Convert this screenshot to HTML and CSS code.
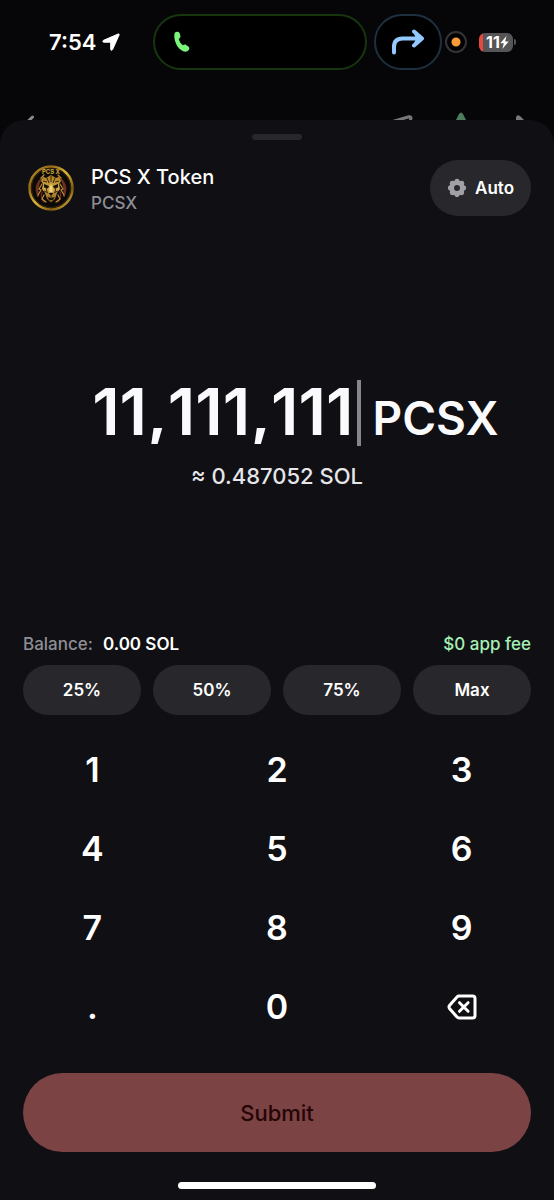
FILE: index.html
```html
<!DOCTYPE html>
<html lang="en">
<head>
<meta charset="utf-8">
<meta name="viewport" content="width=device-width, initial-scale=1">
<title>Swap PCSX</title>
<link rel="stylesheet" href="styles.css">
</head>
<body>
<div class="screen">
  <div class="status">
    <div class="clock">
      <span>7:54</span>
      <svg width="18" height="18" viewBox="0 0 18 18"><path d="M16.200 1 1.600 7.300c-1.200.5-1 1.900.3 1.900h6.800v7c0 1.300 1.400 1.500 1.900.3L17.100 1.900c.3-.8-.2-1.200-.9-.9Z" fill="#fff" stroke="#fff" stroke-linejoin="round"/></svg>
    </div>
    <div class="island">
      <svg width="18" height="22" viewBox="0 0 18 22"><path d="M2.300 1.200C4 .1 6.300.6 6.800 2.600l.6 2.600c.3 1.300-.9 2.100-1.700 2.600.5 2.500 2.200 5 4.300 6.500.9-.6 2-1.100 3.100-.4l2.500 1.900c1.400 1.200.8 3.100-.9 4.200-3.200 2-7.600-.7-10.300-4.700C1.600 11 .2 3.200 2.300 1.200Z" fill="#7bf57c"/></svg>
    </div>
    <div class="share">
      <svg width="34" height="26" viewBox="0 0 34 26" fill="none" stroke="#94c9ff" stroke-width="4" stroke-linecap="round" stroke-linejoin="round"><path d="M3 23.500V18c0-5.500 3-8.500 8.500-8.500H29M23 2.500l8 7-8 7"/><path d="M24 4.500 30 9.500l-6 5 2-5Z" fill="#94c9ff" stroke-width="2"/></svg>
    </div>
    <div class="mic"></div>
    <div class="battery">
      <div class="cell"><span>11</span><svg width="9" height="13" viewBox="0 0 9 13"><path d="M6.500 0 .3 7.300h3.500L2.300 13 8.700 5.400H5.200Z" fill="#fff"/></svg></div>
      <div class="nub"></div>
    </div>
  </div>

  <div class="behind">
    <svg width="14" height="8" viewBox="0 0 14 8" fill="none" stroke="#8b8b8d" stroke-width="3" stroke-linecap="round"><path d="M8.500 5 3 10.500"/></svg>
    <div class="behind-actions">
      <svg width="26" height="8" viewBox="0 0 26 8" fill="none" stroke="#77777a" stroke-width="3" stroke-linejoin="round"><path d="M2 10 20 4.800q2-.5 2 1.500L20 12"/></svg>
      <svg width="12" height="8" viewBox="0 0 12 8"><path d="M1 8 4 2q2-3 4 0l3 6Z" fill="#4d7b5b"/></svg>
      <svg width="12" height="8" viewBox="0 0 12 8" fill="none" stroke="#77777a" stroke-width="3" stroke-linejoin="round"><path d="M2.500 10V6q0-2 1.500-.8L10 11"/></svg>
    </div>
  </div>

  <main class="sheet">
    <div class="handle"></div>
    <header class="token">
      <svg class="coin" width="48" height="48" viewBox="0 0 48 48">
        <defs>
          <linearGradient id="rim" x1="0" y1="0" x2="1" y2="1"><stop offset="0" stop-color="#c79b2b"/><stop offset=".25" stop-color="#8f6715"/><stop offset=".5" stop-color="#e0b83c"/><stop offset=".75" stop-color="#80590f"/><stop offset="1" stop-color="#f1cf55"/></linearGradient>
          <linearGradient id="gold" x1="0" y1="0" x2="0" y2="1"><stop offset="0" stop-color="#a87a20"/><stop offset=".5" stop-color="#d3aa48"/><stop offset="1" stop-color="#7d5415"/></linearGradient>
        </defs>
        <circle cx="24" cy="24" r="21.500" fill="#0b0a09" stroke="url(#rim)" stroke-width="2.500"/>
        <circle cx="24" cy="24" r="19.500" fill="none" stroke="#3f2e0d" stroke-width=".8"/>
        <text x="24" y="9.500" text-anchor="middle" class="coin-name">PCS X</text>
        <g fill="none" stroke-linecap="round">
          <path d="M14 15q-5 7-3 17M34 15q5 7 3 17" stroke="#6b3c1a" stroke-width="2"/>
          <path d="M12 17q-4 6-2 12M36 17q4 6 2 12M15 28q-2 5 2 10M33 28q2 5-2 10" stroke="#6e2820" stroke-width="1.500"/>
          <path d="m15 20-3 5 2 1-3 5M33 20l3 5-2 1 3 5M17 31l-2 4 4 3M31 31l2 4-4 3M14 14l3-3M34 14l-3-3" stroke="#c28b37" stroke-width="1.200"/>
        </g>
        <path d="m19 14 5-3 5 3 3-1.500 2 4.500-2 3 1 5-3 4-2 6-4 3.500-4-3.500-2-6-3-4 1-5-2-3 2-4.500Z" fill="url(#gold)"/>
        <path d="m17 20 5 2-1 2.500-4-1ZM31 20l-5 2 1 2.500 4-1ZM21.500 29h5L24 32ZM20.500 33l3.500 1 3.500-1-1.500 3h-4Z" fill="#1b1106"/>
        <path d="M24 12v6M20 14l2 5M28 14l-2 5M17 27l4 2M31 27l-4 2M16 17l4 1M32 17l-4 1M24 32v2M19 23l1 5M29 23l-1 5" stroke="#38230a" stroke-width="1" fill="none"/>
        <path d="m22.500 23 1.500-3 1.500 3v5h-3Z" fill="#f0d278"/>
      </svg>
      <div class="names">
        <h1>PCS X Token</h1>
        <p>PCSX</p>
      </div>
      <button class="auto" type="button">
        <svg width="20" height="20" viewBox="0 0 20 20"><g fill="#a0a0a6"><circle cx="10" cy="10" r="7.800"/><circle cx="10" cy="3.200" r="2.400"/><circle cx="14.800" cy="5.200" r="2.400"/><circle cx="16.800" cy="10" r="2.400"/><circle cx="14.800" cy="14.800" r="2.400"/><circle cx="10" cy="16.800" r="2.400"/><circle cx="5.200" cy="14.800" r="2.400"/><circle cx="3.200" cy="10" r="2.400"/><circle cx="5.200" cy="5.200" r="2.400"/></g><circle cx="10" cy="10" r="3" fill="#28282c"/></svg>
        <span>Auto</span>
      </button>
    </header>

    <section class="entry">
      <div class="amount">
        <input id="amount" type="text" inputmode="none" value="11,111,111">
        <span class="caret"></span>
        <label for="amount">PCSX</label>
      </div>
      <p class="value">≈ 0.487052 SOL</p>
    </section>

    <div class="balance">
      <span class="muted">Balance:</span>
      <span class="funds">0.00 SOL</span>
      <span class="fee">$0 app fee</span>
    </div>
    <div class="chips">
      <button type="button">25%</button>
      <button type="button">50%</button>
      <button type="button">75%</button>
      <button type="button">Max</button>
    </div>

    <div class="keypad">
      <button type="button">1</button><button type="button">2</button><button type="button">3</button>
      <button type="button">4</button><button type="button">5</button><button type="button">6</button>
      <button type="button">7</button><button type="button">8</button><button type="button">9</button>
      <button type="button">.</button><button type="button">0</button>
      <button type="button" aria-label="Delete">
        <svg width="30" height="26" viewBox="0 0 30 26" fill="none" stroke="#fff" stroke-width="3" stroke-linecap="round" stroke-linejoin="round"><path d="M12 2h13.500Q28 2 28 4.500v17q0 2.500-2.500 2.500H12q-1.200 0-2-.9l-7.300-8.400q-1.400-1.700 0-3.400L10 2.900Q10.800 2 12 2Z"/><path d="m12.500 8.700 8.600 8.600m0-8.600-8.600 8.600"/></svg>
      </button>
    </div>

    <div class="action"><button class="submit" type="button">Submit</button></div>
    <div class="home"></div>
  </main>
</div>
</body>
</html>
```
FILE: styles.css
```css
* {
  box-sizing: border-box;
}

body {
  margin: 0;
  background: #060608;
  color: #fff;
  font-family: Inter, "Liberation Sans", sans-serif;
  font-weight: 500;
}

h1,
p {
  margin: 0;
}

button {
  border: 0;
  padding: 0;
  color: inherit;
  font: inherit;
}

svg {
  display: block;
  flex: none;
}

.screen {
  display: flex;
  flex-direction: column;
  min-height: 100vh;
}

/* Status bar */
.status {
  display: flex;
  align-items: center;
  height: 112px;
  padding: 14px 38px 42px 49px;
}

.clock {
  display: flex;
  align-items: center;
  gap: 6px;
  width: 104px;
  font-size: 22px;
  font-weight: 600;
}

.island {
  display: flex;
  flex: 1;
  align-items: center;
  height: 56px;
  margin-right: 7px;
  padding-left: 18px;
  border: 2px solid #17350f;
  border-radius: 28px;
  background: #000;
}

.share {
  display: flex;
  align-items: center;
  justify-content: center;
  width: 68px;
  height: 56px;
  border: 2px solid #1d303f;
  border-radius: 28px;
  background: #000;
}

.mic {
  width: 22px;
  height: 22px;
  margin: 0 12px 0 3px;
  border: 2px solid #343436;
  border-radius: 50%;
  background: radial-gradient(circle, #f99b37 4px, #000 5px);
}

.battery {
  display: flex;
  align-items: center;
  gap: 1px;
}

.cell {
  display: flex;
  align-items: center;
  justify-content: center;
  width: 34px;
  height: 19px;
  padding-left: 3px;
  border-radius: 6px;
  background: linear-gradient(90deg, #e5483f 4px, #555558 4px);
  font-size: 16px;
  font-weight: 700;
  line-height: 19px;
}

.nub {
  width: 2px;
  height: 6px;
  border-radius: 0 2px 2px 0;
  background: #555558;
}

/* Toolbar of the page under the sheet */
.behind {
  display: flex;
  justify-content: space-between;
  height: 8px;
  padding: 0 27px 0 24px;
}

.behind-actions {
  display: flex;
  gap: 40px;
}

.behind-actions svg:last-child {
  margin-left: 8px;
}

/* Sheet */
.sheet {
  display: flex;
  flex: 1;
  flex-direction: column;
  border-radius: 24px 24px 0 0;
  background: #0f0f14;
}

.handle {
  width: 50px;
  height: 6px;
  margin: 14px auto 20px;
  border-radius: 3px;
  background: #28282c;
}

.token {
  display: flex;
  align-items: center;
  padding: 0 23px 0 27px;
}

.coin-name {
  fill: #d3a737;
  font-size: 6px;
  font-weight: 700;
}

.names {
  flex: 1;
  padding: 4px 0 0 16px;
}

.names h1 {
  font-size: 20px;
  font-weight: 500;
  line-height: 26px;
}

.names p {
  color: #8e8e95;
  font-size: 17px;
  line-height: 26px;
}

.auto {
  display: flex;
  align-items: center;
  justify-content: center;
  gap: 8px;
  width: 101px;
  height: 56px;
  border-radius: 28px;
  background: #28282c;
  font-size: 17px;
  font-weight: 600;
}

.entry {
  display: flex;
  flex: 1;
  flex-direction: column;
  align-items: center;
  justify-content: center;
  padding-top: 24px;
}

.amount {
  display: flex;
  align-items: baseline;
  padding-left: 14px;
  font-weight: 600;
}

.amount input {
  width: 284px;
  height: 64px;
  padding: 0;
  border: 0;
  outline: 0;
  background: none;
  color: #fafafc;
  font: inherit;
  font-size: 65px;
  font-kerning: none;
  font-feature-settings: "calt" 0;
  line-height: 64px;
  text-align: right;
}

.caret {
  align-self: stretch;
  width: 4px;
  margin: 0 11px 0 4px;
  background: #87878a;
}

.amount label {
  color: #fafafc;
  font-size: 46px;
  line-height: 56px;
}

.value {
  padding-top: 14px;
  color: #e6e6ea;
  font-size: 22px;
  line-height: 32px;
}

.balance {
  display: flex;
  gap: 10px;
  padding: 0 23px;
  font-size: 17px;
  line-height: 24px;
}

.muted {
  color: #8e8e95;
}

.funds {
  font-weight: 600;
}

.fee {
  margin-left: auto;
  color: #a5f0b4;
}

.chips {
  display: grid;
  grid-template-columns: repeat(4, 1fr);
  gap: 12px;
  padding: 9px 23px 15px;
}

.chips button {
  height: 50px;
  border-radius: 25px;
  background: #28282c;
  font-size: 17px;
  font-weight: 600;
}

.keypad {
  display: grid;
  grid-template-columns: repeat(3, 1fr);
}

.keypad button {
  display: flex;
  align-items: center;
  justify-content: center;
  height: 79px;
  background: none;
  font-size: 34px;
  font-weight: 600;
}

.action {
  padding: 27px 23px 30px;
}

.submit {
  width: 100%;
  height: 79px;
  border-radius: 40px;
  background: #7b4344;
  color: #260507;
  font-size: 22px;
}

.home {
  width: 198px;
  height: 7px;
  margin: 0 auto 11px;
  border-radius: 4px;
  background: #fff;
}
```
